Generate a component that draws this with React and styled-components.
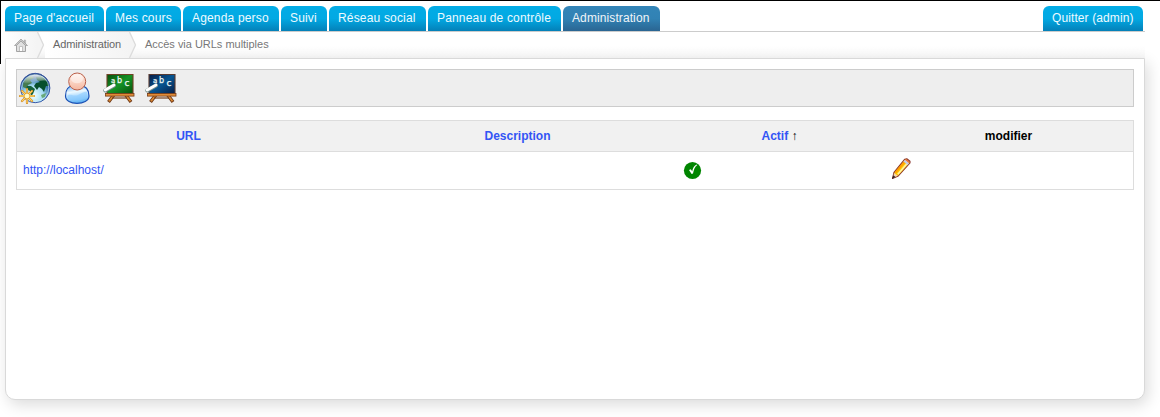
import React from "react";
import styled, { createGlobalStyle } from "styled-components";

const GlobalStyle = createGlobalStyle`
  * { box-sizing: border-box; }
  body {
    margin: 0;
    background: #fff;
    font-family: "Liberation Sans", Arial, sans-serif;
    font-size: 12px;
    overflow: hidden;
  }
`;

const Page = styled.div`
  height: 417px;
  border-top: 1px solid #000;
  padding: 5px 15px 0 5px;
  background: linear-gradient(#000, #000) 0 0 / 1px 63px no-repeat;
`;

const Nav = styled.nav`
  display: flex;
  gap: 2px;
  height: 26px;
  padding-right: 2px;
  border-bottom: 1px solid #ccc;
`;

const Tab = styled.a`
  width: ${(p) => p.$width}px;
  height: 25px;
  padding-left: 9px;
  line-height: 24px;
  letter-spacing: ${(p) => (p.$end || p.$active ? 0.1 : 0.17)}px;
  white-space: nowrap;
  color: ${(p) => (p.$active ? "#f0f4f8" : "#eefaff")};
  border-radius: 6px 6px 0 0;
  margin-left: ${(p) => (p.$end ? "auto" : 0)};
  background: ${(p) =>
    p.$active
      ? "linear-gradient(#3385b8 0%, #3182b4 50%, #2a6592 100%)"
      : "linear-gradient(#02ace6 0%, #02a9e3 50%, #0480b8 100%)"};
`;

const Breadcrumb = styled.div`
  display: flex;
  height: 26px;
  line-height: 25px;
  font-size: 11px;
  color: #777;
  background: linear-gradient(#fff 50%, #f8f8f8);
`;

const Crumb = styled.span`
  display: flex;
  width: ${(p) => p.$width}px;
  padding-left: ${(p) => p.$pad}px;
  white-space: nowrap;
  letter-spacing: ${(p) => (p.$link ? -0.12 : -0.02)}px;
  color: ${(p) => (p.$link ? "#666" : "#777")};
  background: ${(p) => (p.$link ? "linear-gradient(90deg, #fff, #f4f4f4)" : "none")};
`;

const Chevron = styled.svg`
  display: block;
  flex: none;
  width: 8px;
  height: 26px;
`;

const HomeIcon = styled.svg`
  width: 14px;
  height: 14px;
  margin-top: 6px;
`;

const Panel = styled.main`
  height: 342px;
  padding: 10px;
  background: #fff;
  border: 1px solid #d9d9d9;
  border-radius: 0 0 10px 10px;
  box-shadow: 3px 5px 15px rgba(0, 0, 0, 0.14);
`;

const Toolbar = styled.div`
  display: flex;
  gap: 10px;
  height: 38px;
  padding: 2px;
  background: #eee;
  border: 1px solid #ccc;
`;

const ToolIcon = styled.svg`
  width: 32px;
  height: 32px;
`;

const Table = styled.div`
  margin-top: 13px;
  border: 1px solid #ddd;
`;

const Row = styled.div`
  display: grid;
  grid-template-columns: ${(p) => (p.$head ? "343px 315px 209px 249px" : "344px 315px 207px 250px")};
  align-items: center;
  height: ${(p) => (p.$head ? 31 : 37)}px;
  background: ${(p) => (p.$head ? "#f1f1f1" : "#fff")};
  border-bottom: ${(p) => (p.$head ? "1px solid #ddd" : "0")};
`;

const HeadCell = styled.div`
  text-align: center;
  font-weight: bold;
  color: #000;
`;

const Arrow = styled.span`
  font-weight: normal;
`;

const Cell = styled.div`
  display: flex;
  align-items: center;
  padding: 0 0 2px 6px;
  height: 37px;
`;

const Link = styled.a`
  color: #3355f5;
`;

const CellIcon = styled.svg`
  width: 22px;
  height: 22px;
  margin-bottom: 1px;
`;

const Separator = () => (
  <Chevron viewBox="0 0 8 26">
    <path d="M0 0H1L7 13L1 26H0Z" fill="#f4f4f4" />
    <path d="M0.5 0L6.5 13L0.5 26" fill="none" stroke="#dcdcdc" strokeWidth="1.3" />
  </Chevron>
);

const House = () => (
  <HomeIcon viewBox="0 0 14 14">
    <path d="M2.5 7V13.5H11.5V7L7 2.5Z" fill="#e0e0e0" stroke="#a3a3a3" />
    <path d="M10 2h1.6v4L10 4.5Z" fill="#bbb" stroke="#aaa" strokeWidth=".5" />
    <path d="M.5 7.5L7 1L13.5 7.5H11.5L7 3L2.5 7.5Z" fill="#c8c8c8" stroke="#999" strokeWidth=".7" />
    <path d="M5.5 13V8.5H8.5V13" fill="#fff" stroke="#b5b5b5" strokeWidth=".8" />
  </HomeIcon>
);

const Globe = () => (
  <ToolIcon viewBox="0 0 32 32">
    <defs>
      <radialGradient id="sea" cx=".45" cy=".75" r=".72">
        <stop offset="0" stopColor="#f2ffff" />
        <stop offset=".45" stopColor="#a5dcf2" />
        <stop offset=".75" stopColor="#3978ac" />
        <stop offset="1" stopColor="#0b2b61" />
      </radialGradient>
      <linearGradient id="shine" x2="0" y2="1">
        <stop stopColor="#fff" stopOpacity=".9" />
        <stop offset="1" stopColor="#fff" stopOpacity=".08" />
      </linearGradient>
    </defs>
    <circle cx="16.2" cy="16" r="14.7" fill="url(#sea)" stroke="#3454a5" strokeWidth="1" />
    <path d="M4 13C5 8 9 4 13 4L15 6L11 8L13 11L9 13L8 17L4 15Z" fill="#467b50" />
    <path d="M17 5L23 4L28 9L30 14L27 14L25 20L23 17L20 15L18 18L15 14L17 11L21 10L18 8Z" fill="#064f2c" />
    <path d="M8 14L12 14L16 17L14 22L12 24L11 19L7 17Z" fill="#15623c" />
    <path d="M22 23L27 21L26 25L23 26Z" fill="#69a978" />
    <path d="M4 11C6 6 10 2.8 16 2.8S26 5 28 9C21 7 13 12 4 11Z" fill="url(#shine)" />
    <circle cx="16.2" cy="16" r="13.6" fill="none" stroke="#d7f5ff" strokeOpacity=".75" strokeWidth=".8" />
    <path d="M8 17V31M1 24H15M3 19L13 29M13 19L3 29" stroke="#c47812" strokeWidth="2.2" strokeLinecap="round" />
    <path d="M8 17V31M1 24H15M3 19L13 29M13 19L3 29" stroke="#ffd365" strokeWidth="1.3" strokeLinecap="round" />
    <circle cx="8" cy="24" r="2.2" fill="#fff9c8" />
  </ToolIcon>
);

const Person = () => (
  <ToolIcon viewBox="0 0 32 32">
    <defs>
      <linearGradient id="body" x2=".2" y2="1">
        <stop stopColor="#69adf0" />
        <stop offset=".4" stopColor="#edf9ff" />
        <stop offset=".6" stopColor="#b9e1ff" />
        <stop offset="1" stopColor="#65b6f5" />
      </linearGradient>
      <linearGradient id="head" x2="0" y2="1">
        <stop stopColor="#fff0e9" />
        <stop offset="1" stopColor="#f5b79f" />
      </linearGradient>
    </defs>
    <path d="M4.5 24C4.5 17 8 13.8 12 13.8H20C24 13.8 28 17 28 24C28 29 22 31.3 16 31.3S4.5 29 4.5 24Z" fill="url(#body)" stroke="#1b50b4" strokeWidth="1.2" />
    <path d="M6.5 24C9 21 13 25 17 23C21 21 24 19 26 20V25C24 29 9 30 7 26Z" fill="#8acbff" opacity=".55" />
    <circle cx="16.2" cy="9.5" r="8.5" fill="url(#head)" stroke="#bb604a" />
    <ellipse cx="16" cy="6.8" rx="6" ry="4.5" fill="#fff" opacity=".45" />
  </ToolIcon>
);

const BoardLetter = styled.text`
  font-family: "DejaVu Sans", sans-serif;
  font-size: ${(p) => p.$size}px;
  fill: #edf7f3;
  stroke: #edf7f3;
  stroke-width: 0.25px;
`;

const Board = ({ id, from, to, edge }) => (
  <ToolIcon viewBox="0 0 32 32">
    <defs>
      <linearGradient id={id} x2="1" y2="1">
        <stop stopColor={from} />
        <stop offset=".5" stopColor={to} />
        <stop offset="1" stopColor={from} />
      </linearGradient>
    </defs>
    <path d="M11.5 22L5.5 30M22 22L28 30" stroke="#6d3615" strokeWidth="3.4" />
    <path d="M11.5 22L6 29.3M22 22L27.5 29.3" stroke="#d88835" strokeWidth="1.8" />
    <path d="M9 26H24" stroke="#74401d" strokeWidth="1.2" />
    <path d="M4 2.5H30V21.5H4Z" fill={`url(#${id})`} stroke={edge} strokeWidth="1.1" />
    <rect x="2.5" y="21.5" width="28.5" height="2.6" fill="#e08b37" stroke="#743d19" strokeWidth=".8" />
    <BoardLetter $size={7} x="8" y="11">a</BoardLetter>
    <BoardLetter $size={8} x="14" y="11">b</BoardLetter>
    <BoardLetter $size={9} x="21.5" y="13.5">c</BoardLetter>
    <path d="M2.2 18.5L11 13.5" stroke="#77918d" strokeWidth="3.8" strokeLinecap="round" />
    <path d="M2.2 18L11 13" stroke="#fff" strokeWidth="2.8" strokeLinecap="round" />
  </ToolIcon>
);

const Check = () => (
  <CellIcon viewBox="0 0 22 22">
    <circle cx="10.5" cy="12.5" r="8.6" fill="#008500" />
    <path d="M7 12L8.8 11.3L10.2 13.2C10.8 10 12.2 7.5 14.8 6.5L15.3 7.1C12.8 9 11.7 12 11 15.5L9.6 16Z" fill="#fff" />
  </CellIcon>
);

const Pencil = () => (
  <CellIcon viewBox="0 0 22 22">
    <path d="M3.5 20.5L5 14.3L15.8 1.2L17.8 .8L21 3.3V5L9.3 18Z" fill="#ffc400" stroke="#8c3932" strokeWidth="1.1" strokeLinejoin="round" />
    <path d="M6.5 14.5L16 3.4" stroke="#ff9d00" strokeWidth="1.9" />
    <path d="M8.8 16.3L18.5 5.1" stroke="#fff39f" strokeWidth="1.7" />
    <path d="M14.4 3.6L16 1.7L20.2 5L18.6 7Z" fill="#c3cbe7" />
    <path d="M16.2 1.8L17.7 1.3L20.3 3.5L20 4.9Z" fill="#ed6b46" />
    <path d="M5.2 15L8.8 17.8L4 20Z" fill="#f5d3ad" />
    <path d="M4.3 17.2L6.6 19L3 21Z" fill="#34252a" />
  </CellIcon>
);

const tabs = [
  ["Page d'accueil", 99],
  ["Mes cours", 75],
  ["Agenda perso", 96],
  ["Suivi", 46],
  ["Réseau social", 97],
  ["Panneau de contrôle", 133],
  ["Administration", 97],
];

export default function App() {
  return (
    <>
      <GlobalStyle />
      <Page>
        <Nav>
          {tabs.map(([label, width]) => (
            <Tab key={label} $width={width} $active={label === "Administration"}>
              {label}
            </Tab>
          ))}
          <Tab $width={100} $end>Quitter (admin)</Tab>
        </Nav>
        <Breadcrumb>
          <Crumb $width={32} $pad={9} $link><House /></Crumb>
          <Separator />
          <Crumb $width={84} $pad={8} $link>Administration</Crumb>
          <Separator />
          <Crumb $width={160} $pad={8}>Accès via URLs multiples</Crumb>
        </Breadcrumb>
        <Panel>
          <Toolbar>
            <Globe />
            <Person />
            <Board id="green" from="#07500d" to="#159326" edge="#704125" />
            <Board id="blue" from="#071d46" to="#075591" edge="#583b32" />
          </Toolbar>
          <Table>
            <Row $head>
              <HeadCell><Link>URL</Link></HeadCell>
              <HeadCell><Link>Description</Link></HeadCell>
              <HeadCell><Link>Actif</Link> <Arrow>↑</Arrow></HeadCell>
              <HeadCell>modifier</HeadCell>
            </Row>
            <Row>
              <Cell><Link>http://localhost/</Link></Cell>
              <Cell />
              <Cell><Check /></Cell>
              <Cell><Pencil /></Cell>
            </Row>
          </Table>
        </Panel>
      </Page>
    </>
  );
}
